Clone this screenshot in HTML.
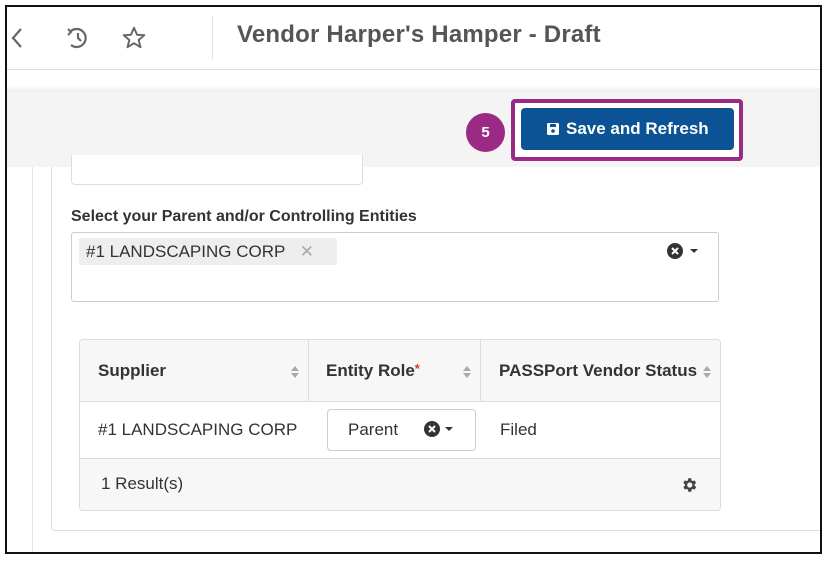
<!DOCTYPE html>
<html><head><style>
*{box-sizing:border-box;margin:0;padding:0}
body{width:827px;height:562px;background:#fff;font-family:"Liberation Sans",sans-serif;position:relative;overflow:hidden;color:#333}
.a{position:absolute}
</style></head><body>
<div class="a" style="left:5px;top:5px;width:817px;height:549px;overflow:hidden;background:#fff">
 <!-- header -->
 <div class="a" style="left:0;top:0;width:817px;height:65px;border-bottom:1px solid #ddd;background:#fff"></div>
 <svg class="a" style="left:5px;top:21px" width="14" height="24" viewBox="0 0 14 24"><path d="M11 3 L3 12 L11 21" stroke="#666" stroke-width="2.2" fill="none"/></svg>
 <svg class="a" style="left:60px;top:21px" width="26" height="24" viewBox="0 0 26 24"><path d="M6 5 A9 9 0 1 1 6 19" stroke="#666" stroke-width="2.2" fill="none"/><path d="M3 3 L6 6 L3 9" stroke="#666" stroke-width="2" fill="none"/><path d="M13 7 V12 L16 15" stroke="#666" stroke-width="2.2" fill="none"/></svg>
 <svg class="a" style="left:116px;top:20px" width="26" height="26" viewBox="0 0 24 24"><path d="M12 2.5 L14.8 9 L21.5 9.4 L16.3 13.8 L18 20.5 L12 16.8 L6 20.5 L7.7 13.8 L2.5 9.4 L9.2 9 Z" stroke="#666" stroke-width="1.8" fill="none" stroke-linejoin="round"/></svg>
 <div class="a" style="left:207px;top:11px;width:1px;height:44px;background:#e2e2e2"></div>
 <div class="a" style="left:232px;top:16px;font-size:24px;color:#555;font-weight:bold;letter-spacing:0.2px">Vendor Harper's Hamper - Draft</div>
 <!-- content -->
 <div class="a" style="left:27px;top:162px;width:1px;height:390px;background:#e4e4e4"></div>
 <div class="a" style="left:46px;top:150px;width:800px;height:376px;border:1px solid #ddd;border-radius:4px;background:#fff"></div>
 <!-- grey band -->
 <div class="a" style="left:0;top:86px;width:817px;height:76px;background:#f4f4f4;box-shadow:0 -2px 4px rgba(0,0,0,0.08)"></div>
 <div class="a" style="left:66px;top:150px;width:292px;height:30px;border:1px solid #ddd;border-top:none;border-radius:0 0 4px 4px;background:#fff"></div>
 <div class="a" style="left:66px;top:203px;font-size:16px;font-weight:bold;color:#333">Select your Parent and/or Controlling Entities</div>
 <div class="a" style="left:66px;top:227px;width:648px;height:70px;border:1px solid #ccc;border-radius:3px"></div>
 <div class="a" style="left:74px;top:233px;width:258px;height:27px;background:#eee;border-radius:2px;font-size:17px;color:#333;padding:4px 0 0 7px">#1 LANDSCAPING CORP <span style="color:#aaa;margin-left:10px">✕</span></div>
 <svg class="a" style="left:661px;top:237px" width="40" height="18" viewBox="0 0 40 18"><circle cx="9" cy="9" r="8" fill="#333"/><path d="M6 6 L12 12 M12 6 L6 12" stroke="#fff" stroke-width="2"/><path d="M24 7 L32 7 L28 11 Z" fill="#333"/></svg>
 <!-- table -->
 <div class="a" style="left:74px;top:334px;width:642px;height:172px;border:1px solid #ddd;border-radius:4px;overflow:hidden">
  <div class="a" style="left:0;top:0;width:642px;height:62px;background:#f7f7f7;border-bottom:1px solid #ddd"></div>
  <div class="a" style="left:228px;top:0;width:1px;height:62px;background:#ddd"></div>
  <div class="a" style="left:400px;top:0;width:1px;height:62px;background:#ddd"></div>
  <div class="a" style="left:18px;top:21px;font-size:17px;font-weight:bold">Supplier</div>
  <div class="a" style="left:246px;top:21px;font-size:17px;font-weight:bold">Entity Role<span style="color:#d33;font-size:13px;vertical-align:top">*</span></div>
  <div class="a" style="left:419px;top:21px;font-size:17px;font-weight:bold">PASSPort Vendor Status</div>
  <svg class="a" style="left:210px;top:25px" width="10" height="14"><path d="M5 1 L9 6 L1 6 Z M1 8 L9 8 L5 13 Z" fill="#aaa"/></svg>
  <svg class="a" style="left:382px;top:25px" width="10" height="14"><path d="M5 1 L9 6 L1 6 Z M1 8 L9 8 L5 13 Z" fill="#aaa"/></svg>
  <svg class="a" style="left:622px;top:25px" width="10" height="14"><path d="M5 1 L9 6 L1 6 Z M1 8 L9 8 L5 13 Z" fill="#aaa"/></svg>
  <div class="a" style="left:18px;top:80px;font-size:17px">#1 LANDSCAPING CORP</div>
  <div class="a" style="left:247px;top:69px;width:149px;height:42px;border:1px solid #ccc;border-radius:4px;font-size:17px;padding:10px 0 0 20px">Parent</div>
  <svg class="a" style="left:343px;top:80px" width="40" height="18" viewBox="0 0 40 18"><circle cx="9" cy="9" r="8" fill="#333"/><path d="M6 6 L12 12 M12 6 L6 12" stroke="#fff" stroke-width="2"/><path d="M22 7 L30 7 L26 11 Z" fill="#333"/></svg>
  <div class="a" style="left:420px;top:80px;font-size:17px">Filed</div>
  <div class="a" style="left:0;top:118px;width:642px;height:54px;background:#f7f7f7;border-top:1px solid #ddd"></div>
  <div class="a" style="left:21px;top:134px;font-size:17px">1 Result(s)</div>
  <svg class="a" style="left:600px;top:136px" width="18" height="18" viewBox="0 0 24 24"><path fill="#444" d="M19.4 13a7.5 7.5 0 0 0 0-2l2.1-1.6-2-3.5-2.5 1a7.6 7.6 0 0 0-1.700-1L15 3h-4l-.4 2.9a7.6 7.6 0 0 0-1.7 1l-2.5-1-2 3.5L6.6 11a7.5 7.5 0 0 0 0 2l-2.1 1.6 2 3.5 2.5-1a7.6 7.6 0 0 0 1.7 1L11 21h4l.4-2.9a7.6 7.6 0 0 0 1.7-1l2.5 1 2-3.5zM13 15.5a3.5 3.5 0 1 1 0-7 3.5 3.5 0 0 1 0 7z"/></svg>
 </div>
 <!-- save button -->
 <div class="a" style="left:506px;top:94px;width:232px;height:62px;border:4px solid #9b2a84;border-radius:4px;background:#fff"></div>
 <div class="a" style="left:516px;top:103px;width:213px;height:42px;background:#0b5394;border-radius:4px;color:#fff;font-size:17px;font-weight:bold;padding:11px 0 0 45px">Save and Refresh</div>
 <svg class="a" style="left:541px;top:117px" width="14" height="14" viewBox="0 0 14 14"><rect x="1" y="1" width="12" height="12" rx="1.5" fill="#fff"/><rect x="4" y="2" width="6" height="3" fill="#0b5394"/><circle cx="7" cy="9" r="1.8" fill="#0b5394"/></svg>
 <div class="a" style="left:461px;top:108px;width:39px;height:39px;border-radius:50%;background:#9b2a84;color:#fff;font-weight:bold;font-size:15px;text-align:center;line-height:39px">5</div>
</div>
<div class="a" style="left:5px;top:5px;width:817px;height:549px;border:2px solid #111"></div>
</body></html>
